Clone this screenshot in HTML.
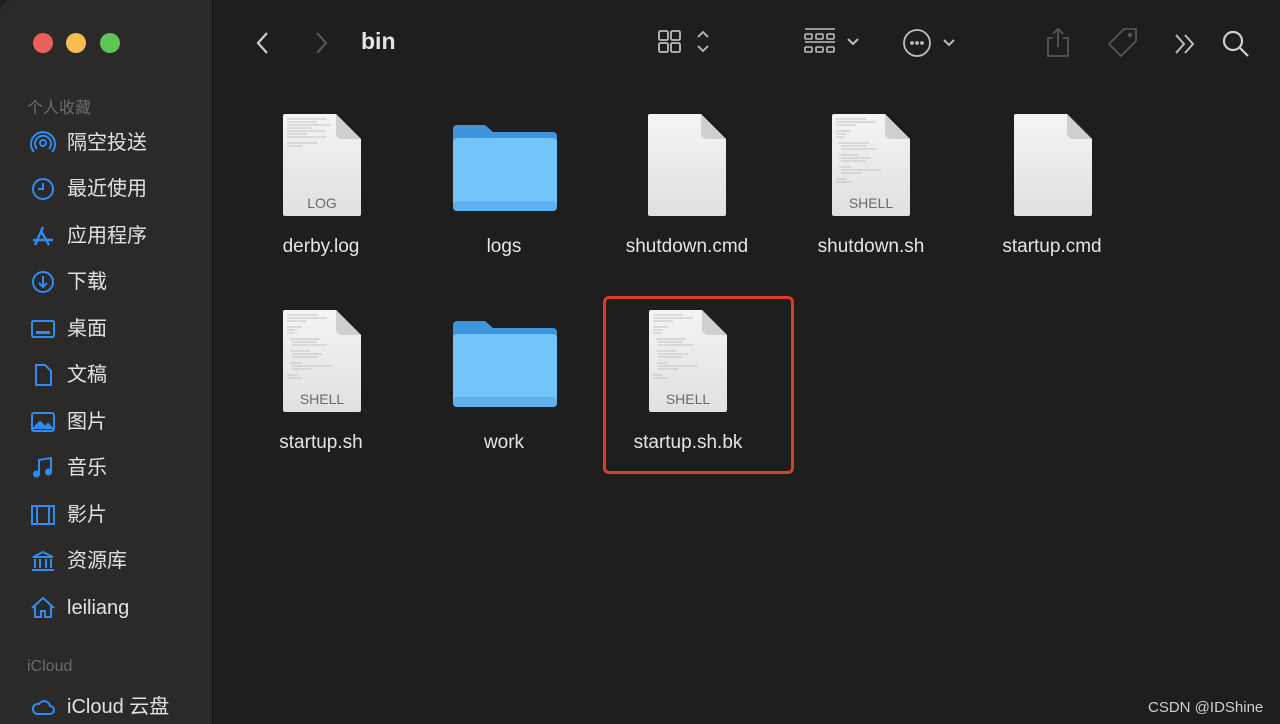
<!DOCTYPE html>
<html><head><meta charset="utf-8"><style>
*{margin:0;padding:0;box-sizing:border-box}
body{width:1280px;height:724px;background:#1e1e1e;overflow:hidden;position:relative;font-family:"Liberation Sans","Noto Sans CJK SC",sans-serif}
.side{position:absolute;left:0;top:0;width:213px;height:724px;background:#2b2a29;border-right:1px solid #111;border-radius:12px 0 0 0}
.dot{position:absolute;top:33px;width:20px;height:20px;border-radius:50%}
.h{position:absolute;left:27px;color:#6e6c6b;font-size:16px}
.it{position:absolute;left:67px;color:#e2e2e2;font-size:20px;line-height:24px}
.ic{position:absolute;left:30px;width:26px;height:26px}
.lbl{position:absolute;color:#e4e4e4;font-size:19px;text-align:center;width:180px}
.doc{position:absolute;width:80px;height:104px}
.fold{position:absolute;width:104px;height:88px}
</style></head><body>
<div class="side">
<div class="dot" style="left:33px;background:#ec5f57"></div>
<div class="dot" style="left:66px;background:#f3bd4f"></div>
<div class="dot" style="left:100px;background:#5fc454"></div>
<div class="h" style="top:94px">个人收藏</div>
<svg class="ic" style="top:130px" viewBox="0 0 26 26" fill="none" stroke="#2f8cf5" stroke-width="2"><circle cx="13" cy="13" r="3"/><path d="M7 19a8 8 0 1 1 12 0M4 22a12 12 0 1 1 18 0"/></svg>
<div class="it" style="top:131px">隔空投送</div>
<svg class="ic" style="top:176px" viewBox="0 0 26 26" fill="none" stroke="#2f8cf5" stroke-width="2"><circle cx="13" cy="13" r="10"/><path d="M13 7v6H8"/></svg>
<div class="it" style="top:177px">最近使用</div>
<svg class="ic" style="top:223px" viewBox="0 0 26 26" fill="none" stroke="#2f8cf5" stroke-width="2.4"><path d="M13 4L5 22M11 8l8 14M3 17h20"/></svg>
<div class="it" style="top:224px">应用程序</div>
<svg class="ic" style="top:269px" viewBox="0 0 26 26" fill="none" stroke="#2f8cf5" stroke-width="2"><circle cx="13" cy="13" r="10"/><path d="M13 7v11M9 14l4 4 4-4"/></svg>
<div class="it" style="top:270px">下载</div>
<svg class="ic" style="top:316px" viewBox="0 0 26 26" fill="none" stroke="#2f8cf5" stroke-width="2"><rect x="2" y="5" width="22" height="16" rx="1.5"/><rect x="6" y="15" width="14" height="3" fill="#2f8cf5" stroke="none"/></svg>
<div class="it" style="top:317px">桌面</div>
<svg class="ic" style="top:362px" viewBox="0 0 26 26" fill="none" stroke="#2f8cf5" stroke-width="2"><path d="M6 3h9l6 6v14H6z"/></svg>
<div class="it" style="top:363px">文稿</div>
<svg class="ic" style="top:409px" viewBox="0 0 26 26" fill="none" stroke="#2f8cf5" stroke-width="2"><rect x="2" y="4" width="22" height="18" rx="2"/><path d="M3 20l7-7 5 5 3-3 5 5" fill="#2f8cf5"/></svg>
<div class="it" style="top:410px">图片</div>
<svg class="ic" style="top:455px" viewBox="0 0 26 26" fill="none" stroke="#2f8cf5" stroke-width="2"><path d="M9 19V5l12-2v14"/><circle cx="6.5" cy="19" r="2.5" fill="#2f8cf5"/><circle cx="18.5" cy="17" r="2.5" fill="#2f8cf5"/></svg>
<div class="it" style="top:456px">音乐</div>
<svg class="ic" style="top:502px" viewBox="0 0 26 26" fill="none" stroke="#2f8cf5" stroke-width="2"><rect x="2" y="4" width="22" height="18"/><path d="M7 4v18M19 4v18"/></svg>
<div class="it" style="top:503px">影片</div>
<svg class="ic" style="top:548px" viewBox="0 0 26 26" fill="none" stroke="#2f8cf5" stroke-width="2"><path d="M3 9l10-5 10 5zM5 11v9M10 11v9M16 11v9M21 11v9M2 22h22"/></svg>
<div class="it" style="top:549px">资源库</div>
<svg class="ic" style="top:595px" viewBox="0 0 26 26" fill="none" stroke="#2f8cf5" stroke-width="2"><path d="M2 13L13 3l11 10M5 11v11h6v-6h4v6h6V11"/></svg>
<div class="it" style="top:596px">leiliang</div>
<div class="h" style="top:658px">iCloud</div>
<svg class="ic" style="top:694px" viewBox="0 0 26 26" fill="none" stroke="#2f8cf5" stroke-width="2"><path d="M7 20h13a4 4 0 0 0 0-8 6 6 0 0 0-11-2 5 5 0 0 0-2 10z"/></svg>
<div class="it" style="top:695px">iCloud 云盘</div>
</div>
<svg style="position:absolute;left:250px;top:28px" width="30" height="30" viewBox="0 0 30 30" fill="none" stroke="#cfcfcf" stroke-width="2.2"><path d="M17 5l-9 10 9 10"/></svg>
<svg style="position:absolute;left:305px;top:28px" width="30" height="30" viewBox="0 0 30 30" fill="none" stroke="#555" stroke-width="2.2"><path d="M12 5l9 10-9 10"/></svg>
<div style="position:absolute;left:361px;top:28px;color:#e6e6e6;font-size:23px;font-weight:bold">bin</div>
<svg style="position:absolute;left:655px;top:28px" width="60" height="30" viewBox="0 0 60 30" fill="none" stroke="#bdbdbd" stroke-width="1.8"><rect x="4" y="3" width="9" height="9" rx="1.5"/><rect x="16" y="3" width="9" height="9" rx="1.5"/><rect x="4" y="15" width="9" height="9" rx="1.5"/><rect x="16" y="15" width="9" height="9" rx="1.5"/><path d="M43 9l5-5 5 5M43 18l5 5 5-5"/></svg>
<svg style="position:absolute;left:800px;top:26px" width="70" height="32" viewBox="0 0 70 32" fill="none" stroke="#bdbdbd" stroke-width="1.6"><path d="M5 3h30M5 16h30"/><rect x="5" y="8" width="7" height="5" rx="1"/><rect x="16" y="8" width="7" height="5" rx="1"/><rect x="27" y="8" width="7" height="5" rx="1"/><rect x="5" y="21" width="7" height="5" rx="1"/><rect x="16" y="21" width="7" height="5" rx="1"/><rect x="27" y="21" width="7" height="5" rx="1"/><path d="M48 13l5 5 5-5" stroke-width="2"/></svg>
<svg style="position:absolute;left:900px;top:26px" width="60" height="32" viewBox="0 0 60 32" fill="none" stroke="#bdbdbd" stroke-width="1.8"><circle cx="17" cy="17" r="13"/><circle cx="12" cy="17" r="1" fill="#bdbdbd"/><circle cx="17" cy="17" r="1" fill="#bdbdbd"/><circle cx="22" cy="17" r="1" fill="#bdbdbd"/><path d="M44 14l5 5 5-5" stroke-width="2"/></svg>
<svg style="position:absolute;left:1042px;top:26px" width="32" height="34" viewBox="0 0 32 34" fill="none" stroke="#555" stroke-width="1.8"><path d="M11 12H6v18h20V12h-5M16 3v18M11 8l5-5 5 5"/></svg>
<svg style="position:absolute;left:1104px;top:26px" width="36" height="34" viewBox="0 0 36 34" fill="none" stroke="#555" stroke-width="1.8"><path d="M20 3h12v12L17 30 5 18z"/><circle cx="26" cy="9" r="1.3" fill="#555"/></svg>
<svg style="position:absolute;left:1172px;top:30px" width="28" height="28" viewBox="0 0 28 28" fill="none" stroke="#bdbdbd" stroke-width="2"><path d="M4 5l8 9-8 9M13 5l8 9-8 9"/></svg>
<svg style="position:absolute;left:1220px;top:28px" width="32" height="32" viewBox="0 0 32 32" fill="none" stroke="#cfcfcf" stroke-width="2.2"><circle cx="13" cy="13" r="9"/><path d="M20 20l8 8"/></svg>
<svg width="0" height="0" style="position:absolute"><defs>
<linearGradient id="dg" x1="0" y1="0" x2="0" y2="1"><stop offset="0" stop-color="#f4f4f4"/><stop offset="1" stop-color="#e0e0e0"/></linearGradient>
<symbol id="doc" viewBox="0 0 80 104"><path d="M3 1h51l25 25v75a2 2 0 0 1-2 2H3a2 2 0 0 1-2-2V3a2 2 0 0 1 2-2z" fill="url(#dg)"/><path d="M54 1v19a6 6 0 0 0 6 6h19z" fill="#cfcfcf"/></symbol>
<symbol id="lines" viewBox="0 0 80 104"><g stroke="#b5b5b5" stroke-width="0.8"><path d="M5 6h40M5 9h30M5 12h44M5 15h25M5 18h38M5 21h20M5 24h40M5 30h30M5 33h15"/></g></symbol>
<symbol id="lines2" viewBox="0 0 80 104"><g stroke="#b5b5b5" stroke-width="0.8"><path d="M5 6h30M5 9h40M5 12h20M5 18h15M5 21h10M5 24h8M8 30h30M10 33h25M10 36h35M8 42h20M10 45h30M10 48h25M8 54h12M10 57h40M10 60h20M5 66h10M5 69h15"/></g></symbol>
<symbol id="fold" viewBox="0 0 104 88"><path d="M4 2h28l8 7h60a4 4 0 0 1 4 4v70a4 4 0 0 1-4 4H4a4 4 0 0 1-4-4V6a4 4 0 0 1 4-4z" fill="#3f95dc"/><rect x="0" y="15" width="104" height="73" rx="4" fill="#72c4f9"/><rect x="0" y="78" width="104" height="10" rx="4" fill="#5fb1ee"/></symbol>
</defs></svg>
<svg class="doc" style="left:282px;top:113px"><use href="#doc"/><use href="#lines"/><text x="40" y="95" font-size="14" fill="#6a6a6a" text-anchor="middle" font-family="Liberation Sans">LOG</text></svg>
<svg class="fold" style="left:453px;top:123px"><use href="#fold"/></svg>
<svg class="doc" style="left:647px;top:113px"><use href="#doc"/></svg>
<svg class="doc" style="left:831px;top:113px"><use href="#doc"/><use href="#lines2"/><text x="40" y="95" font-size="14" fill="#6a6a6a" text-anchor="middle" font-family="Liberation Sans">SHELL</text></svg>
<svg class="doc" style="left:1013px;top:113px"><use href="#doc"/></svg>
<svg class="doc" style="left:282px;top:309px"><use href="#doc"/><use href="#lines2"/><text x="40" y="95" font-size="14" fill="#6a6a6a" text-anchor="middle" font-family="Liberation Sans">SHELL</text></svg>
<svg class="fold" style="left:453px;top:319px"><use href="#fold"/></svg>
<svg class="doc" style="left:648px;top:309px"><use href="#doc"/><use href="#lines2"/><text x="40" y="95" font-size="14" fill="#6a6a6a" text-anchor="middle" font-family="Liberation Sans">SHELL</text></svg>
<div class="lbl" style="left:231px;top:236px">derby.log</div>
<div class="lbl" style="left:414px;top:236px">logs</div>
<div class="lbl" style="left:597px;top:236px">shutdown.cmd</div>
<div class="lbl" style="left:781px;top:236px">shutdown.sh</div>
<div class="lbl" style="left:962px;top:236px">startup.cmd</div>
<div class="lbl" style="left:231px;top:432px">startup.sh</div>
<div class="lbl" style="left:414px;top:432px">work</div>
<div class="lbl" style="left:598px;top:432px">startup.sh.bk</div>
<div style="position:absolute;left:603px;top:296px;width:191px;height:178px;border:3px solid #e03a2a;border-radius:6px"></div>
<div style="position:absolute;left:1148px;top:699px;color:#cfcfcf;font-size:15px">CSDN @IDShine</div>
</body></html>
